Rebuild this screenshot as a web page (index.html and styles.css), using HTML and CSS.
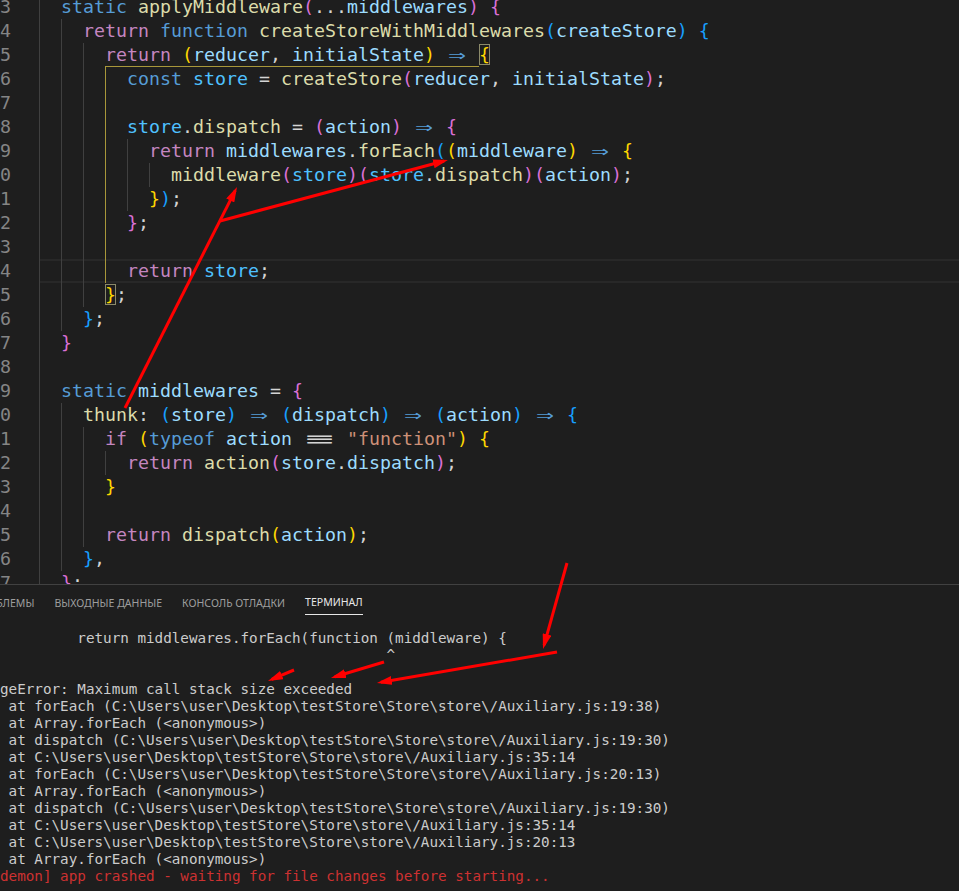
FILE: index.html
```html
<!DOCTYPE html>
<html lang="ru">
<head>
    <meta charset="UTF-8">
    <meta name="viewport" content="width=device-width, initial-scale=1.0">
    <title>Auxiliary.js - testStore</title>
    <link rel="stylesheet" href="styles.css">
</head>
<body>
    <div class="editor">
        <div class="lines">
            <div class="line"><span class="ln">3</span><div class="code"><span class="ig"></span><span class="k">static</span> <span class="f">applyMiddleware</span><span class="b2">(</span>...<span class="v">middlewares</span><span class="b2">)</span> <span class="b2">{</span></div></div>
            <div class="line"><span class="ln">4</span><div class="code"><span class="ig"></span><span class="ig"></span><span class="c">return</span> <span class="k">function</span> <span class="f">createStoreWithMiddlewares</span><span class="b3">(</span><span class="v">createStore</span><span class="b3">)</span> <span class="b3">{</span></div></div>
            <div class="line"><span class="ln">5</span><div class="code"><span class="ig"></span><span class="ig"></span><span class="ig"></span><span class="hl"><span class="c">return</span> <span class="b1">(</span><span class="v">reducer</span>, <span class="v">initialState</span><span class="b1">)</span> <span class="ar">⇒</span> </span><span class="b1 bm">{</span></div></div>
            <div class="line"><span class="ln">6</span><div class="code"><span class="ig"></span><span class="ig"></span><span class="ig"></span><span class="ig act"></span><span class="k">const</span> <span class="n">store</span> = <span class="f">createStore</span><span class="b2">(</span><span class="v">reducer</span>, <span class="v">initialState</span><span class="b2">)</span>;</div></div>
            <div class="line"><span class="ln">7</span><div class="code"><span class="ig"></span><span class="ig"></span><span class="ig"></span><span class="ig act"></span></div></div>
            <div class="line"><span class="ln">8</span><div class="code"><span class="ig"></span><span class="ig"></span><span class="ig"></span><span class="ig act"></span><span class="n">store</span>.<span class="f">dispatch</span> = <span class="b2">(</span><span class="v">action</span><span class="b2">)</span> <span class="ar">⇒</span> <span class="b2">{</span></div></div>
            <div class="line"><span class="ln">9</span><div class="code"><span class="ig"></span><span class="ig"></span><span class="ig"></span><span class="ig act"></span><span class="ig"></span><span class="c">return</span> <span class="v">middlewares</span>.<span class="f">forEach</span><span class="b3">(</span><span class="b1">(</span><span class="v">middleware</span><span class="b1">)</span> <span class="ar">⇒</span> <span class="b1">{</span></div></div>
            <div class="line"><span class="ln">10</span><div class="code"><span class="ig"></span><span class="ig"></span><span class="ig"></span><span class="ig act"></span><span class="ig"></span><span class="ig"></span><span class="f">middleware</span><span class="b2">(</span><span class="n">store</span><span class="b2">)(</span><span class="n">store</span>.<span class="f">dispatch</span><span class="b2">)(</span><span class="v">action</span><span class="b2">)</span>;</div></div>
            <div class="line"><span class="ln">11</span><div class="code"><span class="ig"></span><span class="ig"></span><span class="ig"></span><span class="ig act"></span><span class="ig"></span><span class="b1">}</span><span class="b3">)</span>;</div></div>
            <div class="line"><span class="ln">12</span><div class="code"><span class="ig"></span><span class="ig"></span><span class="ig"></span><span class="ig act"></span><span class="b2">}</span>;</div></div>
            <div class="line"><span class="ln">13</span><div class="code"><span class="ig"></span><span class="ig"></span><span class="ig"></span><span class="ig act"></span></div></div>
            <div class="line"><span class="ln">14</span><div class="code cur"><span class="ig"></span><span class="ig"></span><span class="ig"></span><span class="ig act"></span><span class="c">return</span> <span class="n">store</span>;</div></div>
            <div class="line"><span class="ln">15</span><div class="code"><span class="ig"></span><span class="ig"></span><span class="ig"></span><span class="b1 bm">}</span>;</div></div>
            <div class="line"><span class="ln">16</span><div class="code"><span class="ig"></span><span class="ig"></span><span class="b3">}</span>;</div></div>
            <div class="line"><span class="ln">17</span><div class="code"><span class="ig"></span><span class="b2">}</span></div></div>
            <div class="line"><span class="ln">18</span><div class="code"><span class="ig"></span></div></div>
            <div class="line"><span class="ln">19</span><div class="code"><span class="ig"></span><span class="k">static</span> <span class="v">middlewares</span> = <span class="b2">{</span></div></div>
            <div class="line"><span class="ln">20</span><div class="code"><span class="ig"></span><span class="ig"></span><span class="f">thunk</span>: <span class="b3">(</span><span class="v">store</span><span class="b3">)</span> <span class="ar">⇒</span> <span class="b3">(</span><span class="v">dispatch</span><span class="b3">)</span> <span class="ar">⇒</span> <span class="b3">(</span><span class="v">action</span><span class="b3">)</span> <span class="ar">⇒</span> <span class="b3">{</span></div></div>
            <div class="line"><span class="ln">21</span><div class="code"><span class="ig"></span><span class="ig"></span><span class="ig"></span><span class="c">if</span> <span class="b1">(</span><span class="k">typeof</span> <span class="v">action</span> <span class="eq">≡</span> <span class="s">"function"</span><span class="b1">)</span> <span class="b1">{</span></div></div>
            <div class="line"><span class="ln">22</span><div class="code"><span class="ig"></span><span class="ig"></span><span class="ig"></span><span class="ig"></span><span class="c">return</span> <span class="f">action</span><span class="b2">(</span><span class="v">store</span>.<span class="v">dispatch</span><span class="b2">)</span>;</div></div>
            <div class="line"><span class="ln">23</span><div class="code"><span class="ig"></span><span class="ig"></span><span class="ig"></span><span class="b1">}</span></div></div>
            <div class="line"><span class="ln">24</span><div class="code"><span class="ig"></span><span class="ig"></span><span class="ig"></span></div></div>
            <div class="line"><span class="ln">25</span><div class="code"><span class="ig"></span><span class="ig"></span><span class="ig"></span><span class="c">return</span> <span class="f">dispatch</span><span class="b1">(</span><span class="v">action</span><span class="b1">)</span>;</div></div>
            <div class="line"><span class="ln">26</span><div class="code"><span class="ig"></span><span class="ig"></span><span class="b3">}</span>,</div></div>
            <div class="line"><span class="ln">27</span><div class="code"><span class="ig"></span><span class="b2">}</span>;</div></div>
        </div>
    </div>

    <div class="panel">
        <div class="tabs">
            <span class="tab">ПРОБЛЕМЫ</span>
            <span class="tab">ВЫХОДНЫЕ ДАННЫЕ</span>
            <span class="tab">КОНСОЛЬ ОТЛАДКИ</span>
            <span class="tab active">ТЕРМИНАЛ</span>
        </div>
<pre class="term">            return middlewares.forEach(function (middleware) {
                                                ^

RangeError: Maximum call stack size exceeded
    at forEach (C:\Users\user\Desktop\testStore\Store\store\/Auxiliary.js:19:38)
    at Array.forEach (&lt;anonymous&gt;)
    at dispatch (C:\Users\user\Desktop\testStore\Store\store\/Auxiliary.js:19:30)
    at C:\Users\user\Desktop\testStore\Store\store\/Auxiliary.js:35:14
    at forEach (C:\Users\user\Desktop\testStore\Store\store\/Auxiliary.js:20:13)
    at Array.forEach (&lt;anonymous&gt;)
    at dispatch (C:\Users\user\Desktop\testStore\Store\store\/Auxiliary.js:19:30)
    at C:\Users\user\Desktop\testStore\Store\store\/Auxiliary.js:35:14
    at C:\Users\user\Desktop\testStore\Store\store\/Auxiliary.js:20:13
    at Array.forEach (&lt;anonymous&gt;)
<span class="err">[nodemon] app crashed - waiting for file changes before starting...</span></pre>
    </div>

    <!-- red annotation arrows drawn over the screenshot -->
    <svg class="marks" width="959" height="891" viewBox="0 0 959 891">
        <defs>
            <marker id="head" markerWidth="15" markerHeight="9" refX="11" refY="4.5" orient="auto" markerUnits="userSpaceOnUse">
                <path d="M0 0 L15 4.5 L0 9 Z" fill="#f00"/>
            </marker>
        </defs>
        <g stroke="#f00" stroke-width="3" fill="none">
            <path d="M125 408 L235.2 190.6" marker-end="url(#head)"/>
            <path d="M220 221 L444.1 161" marker-end="url(#head)"/>
            <path d="M567 563 L544.1 645.1" marker-end="url(#head)"/>
            <path d="M557 652 L380.9 682.3" marker-end="url(#head)"/>
            <path d="M384 662 L334.8 676.8" marker-end="url(#head)"/>
            <path d="M294 670 L271.7 679.4" marker-end="url(#head)"/>
        </g>
    </svg>
</body>
</html>
```

FILE: styles.css
```css
body {
    margin: 0;
    background: #1e1e1e;
    height: 891px;
    overflow: hidden;
    position: relative;
}
.editor {
    height: 584px;
    overflow: hidden;
    font-family: 'DejaVu Sans Mono', monospace;
    font-size: 18.27px;
    font-variant-ligatures: none;
}
.lines {
    margin-top: -5px;
}
.line {
    display: flex;
    height: 24px;
    line-height: 24px;
}
.ln {
    flex: none;
    width: 33px;
    margin-left: -22px;
    margin-right: 28px;
    text-align: right;
    color: #858585;
}
.code {
    flex: 1;
    white-space: pre;
    color: #d4d4d4;
}
.code.cur {
    box-shadow: inset 0 2px #282828, inset 0 -2px #282828;
}
.ig {
    display: inline-block;
    width: 22px;
    height: 24px;
    vertical-align: top;
    box-sizing: border-box;
    border-left: 1px solid #404040;
}
.ig.act {
    border-left-color: #a8973a;
}
.hl {
    display: inline-block;
    height: 24px;
    vertical-align: top;
    box-shadow: inset 0 -1px #a8973a;
}
.bm {
    box-shadow: inset 0 0 0 1px #8c8a6a;
}
.ar {
    display: inline-block;
    width: 22px;
    text-align: center;
    color: #569cd6;
    transform: scaleX(1.6);
}
.eq {
    display: inline-block;
    width: 33px;
    text-align: center;
    transform: scaleX(2.6);
}
.k { color: #569cd6; }
.c { color: #c586c0; }
.f { color: #dcdcaa; }
.v { color: #9cdcfe; }
.n { color: #4fc1ff; }
.s { color: #ce9178; }
.b1 { color: #ffd700; }
.b2 { color: #da70d6; }
.b3 { color: #179fff; }

.panel {
    border-top: 1px solid #414141;
}
.tabs {
    display: flex;
    align-items: center;
    gap: 20px;
    height: 35px;
    margin-left: -26px;
    font-family: 'Noto Sans', sans-serif;
    font-size: 10.55px;
    color: #9d9d9d;
}
.tab {
    line-height: 24px;
    white-space: nowrap;
}
.tab.active {
    color: #e7e7e7;
    border-bottom: 1px solid #e7e7e7;
}
.term {
    margin: 0 0 0 -3ch;
    padding-top: 10px;
    font-family: 'DejaVu Sans Mono', monospace;
    font-size: 14.27px;
    line-height: 17px;
    color: #cccccc;
}
.err {
    color: #cd3131;
}
.marks {
    position: absolute;
    top: 0;
    left: 0;
    pointer-events: none;
}
```
